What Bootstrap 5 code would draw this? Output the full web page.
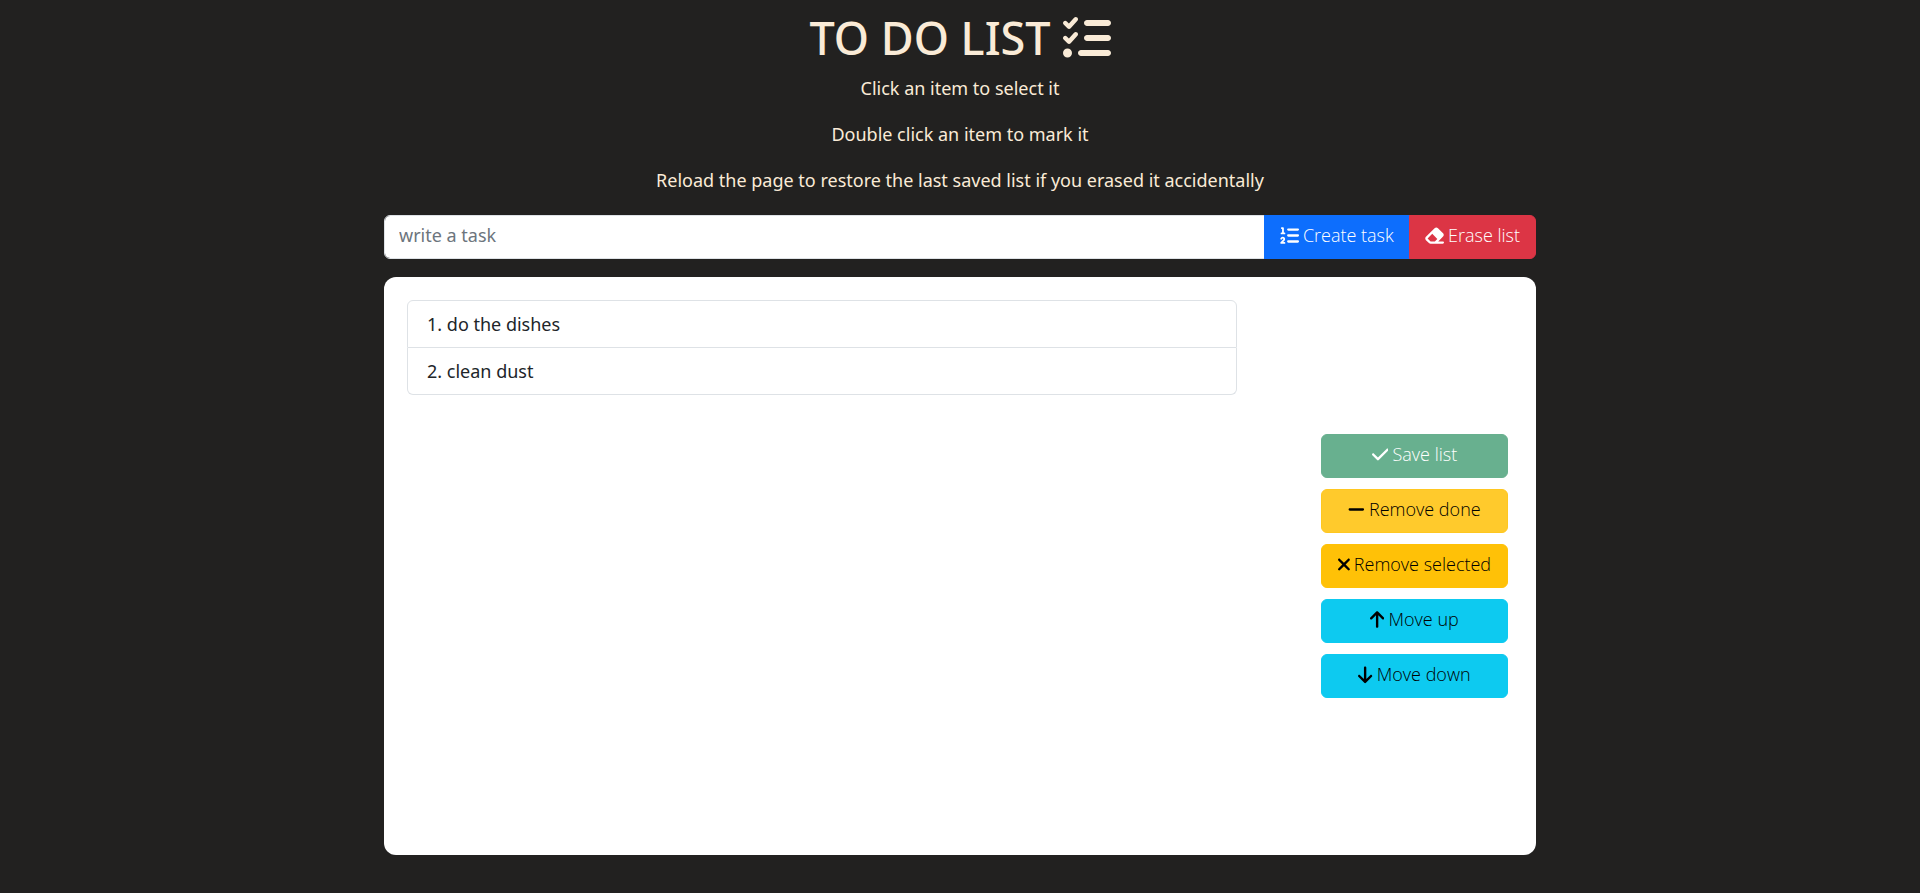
<!DOCTYPE html>
<html lang="en">
<head>
<meta charset="utf-8">
<meta name="viewport" content="width=device-width, initial-scale=1">
<title>To do list</title>
<link href="https://cdn.jsdelivr.net/npm/bootstrap@5.3.0/dist/css/bootstrap.min.css" rel="stylesheet">
<style>
  body { background: #222120; font-family: "Noto Sans", sans-serif; font-size: 18px; line-height: 30px; }
  .todo-page { width: 60%; min-width: 320px; }
  .todo-head { color: antiquewhite; }
  .todo-head h1 { font-size: 45px; font-weight: 500; line-height: 60px; gap: 12px; margin-bottom: 5px; }
  .todo-head .glyph { height: 48px; }
  .glyph { height: 19px; width: auto; fill: currentColor; flex: none; }
  .form-control, .btn { font-size: 18px; line-height: 30px; padding-top: 4px; padding-bottom: 8px; }
  .btn { font-family: "Open Sans", sans-serif; font-weight: 300; gap: 4px; }
  .form-control { padding-left: 14px; }
  .form-control::placeholder { color: #6c757d; }
  .todo-add { margin: 20px 0 18px; }
  .todo-add .btn { padding-left: 15px; padding-right: 15px; }
  .todo-panel { min-height: 578px; border-radius: 12px; padding: 23px; }
  .todo-list { width: 75%; }
  .todo-list .list-group-item { padding-left: 19px; }
  .todo-actions { width: 187px; gap: 11px; margin-right: 5px; }
  .todo-actions .btn { padding-left: 0; padding-right: 0; }
  .btn-hovered { --bs-btn-bg: #ffca2c; --bs-btn-border-color: #ffc720; }
</style>
</head>
<body>
<main class="todo-page mx-auto pt-2">
  <header class="todo-head text-center">
    <h1 class="d-flex justify-content-center align-items-center">TO DO LIST
      <svg class="glyph" viewBox="0 0 512 512" aria-hidden="true"><path d="M152.1 38.2c9.9 8.9 10.7 24 1.8 33.9l-72 80c-4.4 4.9-10.6 7.8-17.2 7.9s-12.9-2.4-17.6-7L7 113C-2.3 103.6-2.3 88.4 7 79s24.6-9.4 33.9 0l22.1 22.1 55.1-61.2c8.9-9.9 24-10.7 33.9-1.8zm0 160c9.9 8.9 10.7 24 1.8 33.9l-72 80c-4.4 4.9-10.6 7.8-17.2 7.9s-12.9-2.4-17.6-7L7 273c-9.4-9.4-9.4-24.6 0-33.9s24.6-9.4 33.9 0l22.1 22.1 55.1-61.2c8.9-9.9 24-10.7 33.9-1.8zM224 96c0-17.7 14.3-32 32-32H480c17.7 0 32 14.3 32 32s-14.3 32-32 32H256c-17.7 0-32-14.3-32-32zm0 160c0-17.7 14.3-32 32-32H480c17.7 0 32 14.3 32 32s-14.3 32-32 32H256c-17.7 0-32-14.3-32-32zM160 416c0-17.7 14.3-32 32-32H480c17.7 0 32 14.3 32 32s-14.3 32-32 32H192c-17.7 0-32-14.3-32-32zM48 368a48 48 0 1 1 0 96 48 48 0 1 1 0-96z"/></svg>
    </h1>
    <p>Click an item to select it</p>
    <p>Double click an item to mark it</p>
    <p class="mb-0">Reload the page to restore the last saved list if you erased it accidentally</p>
  </header>

  <form class="todo-add input-group">
    <input type="text" class="form-control" placeholder="write a task" aria-label="write a task">
    <button type="button" class="btn btn-primary d-flex align-items-center">
      <svg class="glyph" viewBox="0 0 512 512" aria-hidden="true"><path d="M24 56c0-13.3 10.7-24 24-24H80c13.3 0 24 10.7 24 24V176h16c13.3 0 24 10.7 24 24s-10.7 24-24 24H40c-13.3 0-24-10.7-24-24s10.7-24 24-24H56V80H48C34.7 80 24 69.3 24 56zM86.7 341.2c-6.5-7.4-18.3-6.9-24 1.2L51.5 357.9c-7.7 10.8-22.7 13.3-33.5 5.6s-13.3-22.7-5.6-33.5l11.1-15.6c23.7-33.2 72.3-35.6 99.2-4.9c21.3 24.4 20.8 60.9-1.1 84.7L86.8 432H120c13.3 0 24 10.7 24 24s-10.7 24-24 24H32c-9.5 0-18.2-5.6-22-14.4s-2.1-18.9 4.3-25.9l72-78c5.3-5.8 5.4-14.6 .3-20.5zM224 64H480c17.7 0 32 14.3 32 32s-14.3 32-32 32H224c-17.7 0-32-14.3-32-32s14.3-32 32-32zm0 160H480c17.7 0 32 14.3 32 32s-14.3 32-32 32H224c-17.7 0-32-14.3-32-32s14.3-32 32-32zm0 160H480c17.7 0 32 14.3 32 32s-14.3 32-32 32H224c-17.7 0-32-14.3-32-32s14.3-32 32-32z"/></svg>
      Create task</button>
    <button type="button" class="btn btn-danger d-flex align-items-center">
      <svg class="glyph" viewBox="32 0 520 512" aria-hidden="true"><path d="M290.7 57.4L57.4 290.7c-25 25-25 65.5 0 90.5l80 80c12 12 28.3 18.7 45.3 18.7H288h9.4H512c17.7 0 32-14.3 32-32s-14.3-32-32-32H387.9L518.6 285.3c25-25 25-65.5 0-90.5L381.3 57.4c-25-25-65.5-25-90.5 0zM297.4 416H288l-105.4 0-80-80L227.3 211.3 364.7 348.7 297.4 416z"/></svg>
      Erase list</button>
  </form>

  <section class="todo-panel bg-white d-flex justify-content-between">
    <ol class="todo-list list-group list-group-numbered align-self-start">
      <li class="list-group-item">do the dishes</li>
      <li class="list-group-item">clean dust</li>
    </ol>
    <div class="todo-actions d-flex flex-column justify-content-center">
      <button type="button" class="btn btn-success d-flex justify-content-center align-items-center" disabled>
        <svg class="glyph" viewBox="0 0 448 512" aria-hidden="true"><path d="M438.6 105.4c12.5 12.5 12.5 32.8 0 45.3l-256 256c-12.5 12.5-32.8 12.5-45.3 0l-128-128c-12.5-12.5-12.5-32.8 0-45.3s32.8-12.5 45.3 0L160 338.7 393.4 105.4c12.5-12.5 32.8-12.5 45.3 0z"/></svg>
        Save list</button>
      <button type="button" class="btn btn-warning btn-hovered d-flex justify-content-center align-items-center">
        <svg class="glyph" viewBox="0 0 448 512" aria-hidden="true"><path d="M432 256c0 17.7-14.3 32-32 32L48 288c-17.7 0-32-14.3-32-32s14.3-32 32-32l352 0c17.7 0 32 14.3 32 32z"/></svg>
        Remove done</button>
      <button type="button" class="btn btn-warning d-flex justify-content-center align-items-center">
        <svg class="glyph" viewBox="32 0 320 512" aria-hidden="true"><path d="M342.6 150.6c12.5-12.5 12.5-32.8 0-45.3s-32.8-12.5-45.3 0L192 210.7 86.6 105.4c-12.5-12.5-32.8-12.5-45.3 0s-12.5 32.8 0 45.3L146.7 256 41.4 361.4c-12.5 12.5-12.5 32.8 0 45.3s32.8 12.5 45.3 0L192 301.3 297.4 406.6c12.5 12.5 32.8 12.5 45.3 0s12.5-32.8 0-45.3L237.3 256 342.6 150.6z"/></svg>
        Remove selected</button>
      <button type="button" class="btn btn-info d-flex justify-content-center align-items-center">
        <svg class="glyph" viewBox="0 0 384 512" aria-hidden="true"><path d="M214.6 41.4c-12.5-12.5-32.8-12.5-45.3 0l-160 160c-12.5 12.5-12.5 32.8 0 45.3s32.8 12.5 45.3 0L160 141.2V448c0 17.7 14.3 32 32 32s32-14.3 32-32V141.2L329.4 246.6c12.5 12.5 32.8 12.5 45.3 0s12.5-32.8 0-45.3l-160-160z"/></svg>
        Move up</button>
      <button type="button" class="btn btn-info d-flex justify-content-center align-items-center">
        <svg class="glyph" viewBox="0 0 384 512" aria-hidden="true"><path transform="matrix(1 0 0 -1 0 521)" d="M214.6 41.4c-12.5-12.5-32.8-12.5-45.3 0l-160 160c-12.5 12.5-12.5 32.8 0 45.3s32.8 12.5 45.3 0L160 141.2V448c0 17.7 14.3 32 32 32s32-14.3 32-32V141.2L329.4 246.6c12.5 12.5 32.8 12.5 45.3 0s12.5-32.8 0-45.3l-160-160z"/></svg>
        Move down</button>
    </div>
  </section>
</main>
<script src="https://cdn.jsdelivr.net/npm/bootstrap@5.3.0/dist/js/bootstrap.bundle.min.js"></script>
</body>
</html>
